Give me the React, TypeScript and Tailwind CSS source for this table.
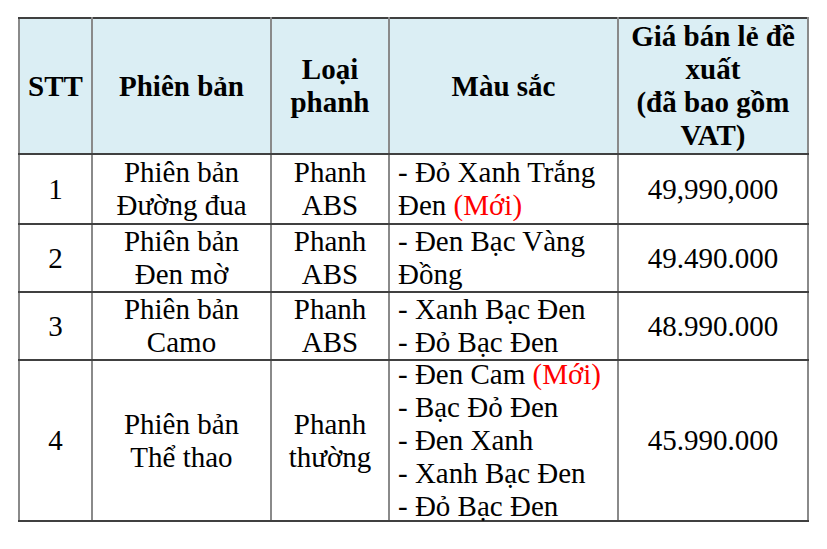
const rows = [
  {
    stt: "1",
    name: ["Phiên bản", "Đường đua"],
    brake: ["Phanh", "ABS"],
    colors: [
      ["- Đỏ Xanh Trắng"],
      ["Đen ", "(Mới)"],
    ],
    price: "49,990,000",
    h: "h-[68px]",
  },
  {
    stt: "2",
    name: ["Phiên bản", "Đen mờ"],
    brake: ["Phanh", "ABS"],
    colors: [["- Đen Bạc Vàng"], ["Đồng"]],
    price: "49.490.000",
    h: "h-[66px]",
  },
  {
    stt: "3",
    name: ["Phiên bản", "Camo"],
    brake: ["Phanh", "ABS"],
    colors: [["- Xanh Bạc Đen"], ["- Đỏ Bạc Đen"]],
    price: "48.990.000",
    h: "h-[66px]",
  },
  {
    stt: "4",
    name: ["Phiên bản", "Thể thao"],
    brake: ["Phanh", "thường"],
    colors: [
      ["- Đen Cam ", "(Mới)"],
      ["- Bạc Đỏ Đen"],
      ["- Đen Xanh"],
      ["- Xanh Bạc Đen"],
      ["- Đỏ Bạc Đen"],
    ],
    price: "45.990.000",
    h: "h-[159px]",
  },
];

const cell = "p-0 border-x-2 border-x-[#8a8a8a] border-y-2 border-y-[#404040] align-middle";

function Lines({ lines, h, left }: { lines: string[][]; h: string; left?: boolean }) {
  return (
    <div className={`${h} flex flex-col justify-center ${left ? "items-start pl-[8px]" : "items-center text-center"}`}>
      {lines.map((l, i) => (
        <div key={i} className="leading-[33px] whitespace-nowrap">
          {l[0]}
          {l[1] && <span className="text-[#ff0000]">{l[1]}</span>}
        </div>
      ))}
    </div>
  );
}

export default function App() {
  return (
    <div className="w-[827px] h-[549px] bg-white pt-[17px] pl-[18px] overflow-hidden text-[29px] text-black font-['Liberation_Serif','Times_New_Roman',serif]">
      <table className="border-collapse table-fixed">
        <colgroup>
          <col className="w-[73px]" />
          <col className="w-[179px]" />
          <col className="w-[118px]" />
          <col className="w-[229px]" />
          <col className="w-[190px]" />
        </colgroup>
        <thead>
          <tr className="bg-[#dbeef4] font-bold">
            <th className={cell}>
              <Lines lines={[["STT"]]} h="h-[134px]" />
            </th>
            <th className={cell}>
              <Lines lines={[["Phiên bản"]]} h="h-[134px]" />
            </th>
            <th className={cell}>
              <Lines lines={[["Loại"], ["phanh"]]} h="h-[134px]" />
            </th>
            <th className={cell}>
              <Lines lines={[["Màu sắc"]]} h="h-[134px]" />
            </th>
            <th className={cell}>
              <Lines lines={[["Giá bán lẻ đề"], ["xuất"], ["(đã bao gồm"], ["VAT)"]]} h="h-[134px]" />
            </th>
          </tr>
        </thead>
        <tbody>
          {rows.map((r) => (
            <tr key={r.stt}>
              <td className={cell}>
                <Lines lines={[[r.stt]]} h={r.h} />
              </td>
              <td className={cell}>
                <Lines lines={r.name.map((n) => [n])} h={r.h} />
              </td>
              <td className={cell}>
                <Lines lines={r.brake.map((n) => [n])} h={r.h} />
              </td>
              <td className={cell}>
                <Lines lines={r.colors} h={r.h} left />
              </td>
              <td className={cell}>
                <Lines lines={[[r.price]]} h={r.h} />
              </td>
            </tr>
          ))}
        </tbody>
      </table>
    </div>
  );
}
